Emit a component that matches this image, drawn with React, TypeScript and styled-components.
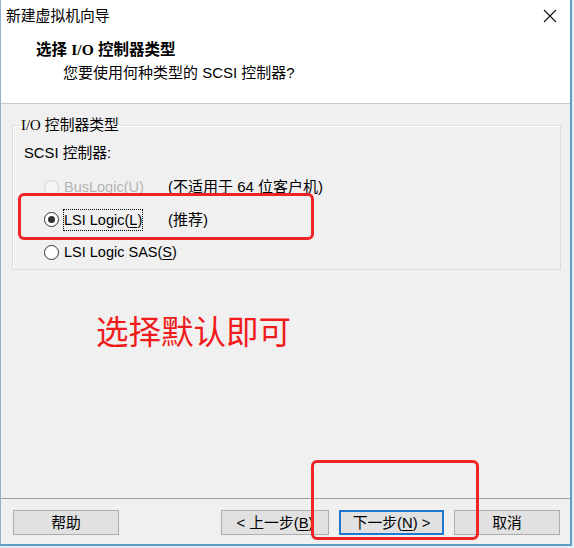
import React from 'react';
import styled, { createGlobalStyle } from 'styled-components';

const GlobalStyle = createGlobalStyle`
  html, body {
    margin: 0;
    padding: 0;
    background: #e4edf3;
  }
  body {
    font-family: "Liberation Sans", "Noto Sans CJK SC", sans-serif;
    font-size: 14.5px;
    color: #000;
  }
`;

const Window = styled.div`
  position: relative;
  width: 569px;
  height: 544px;
  display: flex;
  flex-direction: column;
  background: #f0f0f0;
  border-left: 1px solid #8fb3cc;
  border-right: 2px solid #5e9ec6;
  border-bottom: 2px solid #5e9ec6;
`;

const TitleBar = styled.div`
  height: 32px;
  display: flex;
  align-items: center;
  justify-content: space-between;
  padding: 0 12px 0 5px;
  background: #fff;
  font-size: 14.8px;
  line-height: 20px;
`;

const CloseIcon = styled.svg`
  width: 14px;
  height: 14px;
  margin-right: 1px;
`;

const Header = styled.div`
  height: 72px;
  padding: 8px 0 0 35px;
  box-sizing: border-box;
  background: #fff;
  border-bottom: 1px solid #c9c9c9;
`;

const Heading = styled.div`
  font-weight: bold;
  font-size: 15.5px;
  line-height: 20px;
`;

const Subtitle = styled.div`
  margin: 3px 0 0 27px;
  font-size: 15px;
  line-height: 20px;
`;

const Serif = styled.span`
  font-family: "Liberation Serif", "Noto Sans CJK SC", serif;
`;

const Body = styled.div`
  flex: 1;
  padding: 11px 9px 0 11px;
`;

const Group = styled.fieldset`
  margin: 0;
  padding: 0 10px 0 11px;
  border: 1px solid #dcdcdc;
  box-shadow: inset 1px 1px 0 #fff;
`;

const Legend = styled.legend`
  margin-left: -4px;
  padding: 0 1px;
  font-size: 14.8px;
  line-height: 20px;
`;

const FieldLabel = styled.div`
  margin-top: 8px;
  font-size: 14.8px;
  line-height: 20px;
`;

const Options = styled.div`
  margin-top: 8px;
  padding-left: 20px;
`;

const Option = styled.div<{ disabled?: boolean }>`
  height: 32.5px;
  display: grid;
  grid-template-columns: 15px 99px auto;
  column-gap: 5px;
  align-items: center;
  line-height: 20px;
  color: ${p => (p.disabled ? '#b4b4b4' : '#000')};
`;

const Radio = styled.span<{ checked?: boolean; disabled?: boolean }>`
  width: 15px;
  height: 15px;
  box-sizing: border-box;
  border-radius: 50%;
  border: 1px solid ${p => (p.disabled ? '#d2d2d2' : '#333')};
  background: ${p => (p.disabled ? '#f4f4f4' : '#fff')};
  display: flex;
  align-items: center;
  justify-content: center;
  &::after {
    content: '';
    display: ${p => (p.checked ? 'block' : 'none')};
    width: 7px;
    height: 7px;
    border-radius: 50%;
    background: #333;
  }
`;

const OptionText = styled.span<{ focused?: boolean }>`
  justify-self: start;
  white-space: nowrap;
  outline: ${p => (p.focused ? '1px dotted #000' : 'none')};
  outline-offset: 0;
`;

const Note = styled.span`
  white-space: nowrap;
  font-size: 15px;
  color: #000;
`;

const Key = styled.u`
  text-underline-offset: 2px;
`;

const Hint = styled.div`
  margin: 42px 0 0 84px;
  font-family: "Noto Sans CJK SC", sans-serif;
  font-size: 32.5px;
  line-height: 36px;
  color: #f01c1c;
`;

const Footer = styled.div`
  height: 46px;
  box-sizing: border-box;
  display: flex;
  align-items: flex-start;
  padding: 11px 10px 0 12px;
  border-top: 1px solid #a0a0a0;
`;

const Button = styled.button<{ primary?: boolean; width?: number }>`
  width: ${p => p.width ?? 106}px;
  height: 25px;
  box-sizing: border-box;
  padding: 0;
  margin: 0;
  background: #e1e1e1;
  border: ${p => (p.primary ? '2px solid #1f78cf' : '1px solid #adadad')};
  font-family: "Liberation Sans", "Noto Sans CJK SC", sans-serif;
  font-size: 14.8px;
  line-height: 20px;
  color: #000;
  & + & {
    margin-left: 10px;
  }
`;

const Spacer = styled.div`
  flex: 1;
`;

const Callout = styled.div<{ x: number; y: number; w: number; h: number }>`
  position: absolute;
  left: ${p => p.x}px;
  top: ${p => p.y}px;
  width: ${p => p.w}px;
  height: ${p => p.h}px;
  box-sizing: border-box;
  border: 3px solid #f02424;
  border-radius: 6px;
  pointer-events: none;
`;

type OptionItem = {
  label: string;
  key: string;
  note?: string;
  checked?: boolean;
  disabled?: boolean;
};

const options: OptionItem[] = [
  { label: 'BusLogic(', key: 'U', note: '(不适用于 64 位客户机)', disabled: true },
  { label: 'LSI Logic(', key: 'L', note: '(推荐)', checked: true },
  { label: 'LSI Logic SAS(', key: 'S' },
];

export default function App() {
  return (
    <>
      <GlobalStyle />
      <Window>
        <TitleBar>
          <span>新建虚拟机向导</span>
          <CloseIcon viewBox="0 0 14 14">
            <path d="M1 1 L13 13 M13 1 L1 13" stroke="#111" strokeWidth="1.1" fill="none" />
          </CloseIcon>
        </TitleBar>
        <Header>
          <Heading>
            选择 <Serif>I/O</Serif> 控制器类型
          </Heading>
          <Subtitle>您要使用何种类型的 SCSI 控制器?</Subtitle>
        </Header>
        <Body>
          <Group>
            <Legend>
              <Serif>I/O</Serif> 控制器类型
            </Legend>
            <FieldLabel>SCSI 控制器:</FieldLabel>
            <Options>
              {options.map(o => (
                <Option key={o.key} disabled={o.disabled}>
                  <Radio checked={o.checked} disabled={o.disabled} />
                  <OptionText focused={o.checked}>
                    {o.label}
                    <Key>{o.key}</Key>)
                  </OptionText>
                  {o.note ? <Note>{o.note}</Note> : <span />}
                </Option>
              ))}
            </Options>
          </Group>
          <Hint>选择默认即可</Hint>
        </Body>
        <Footer>
          <Button>帮助</Button>
          <Spacer />
          <Button width={108}>
            &lt; 上一步(<Key>B</Key>)
          </Button>
          <Button primary width={105}>
            下一步(<Key>N</Key>) &gt;
          </Button>
          <Button>取消</Button>
        </Footer>
        <Callout x={17} y={193} w={296} h={47} />
        <Callout x={310} y={460} w={168} h={80} />
      </Window>
    </>
  );
}
